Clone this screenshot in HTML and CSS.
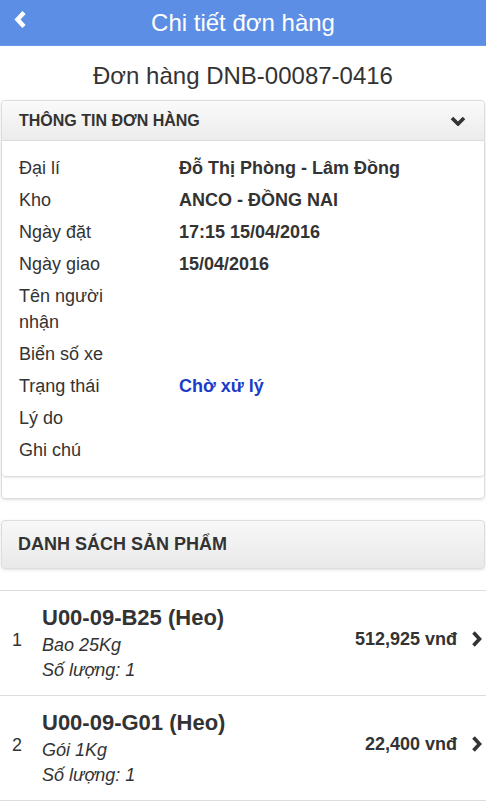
FILE: index.html
```html
<!DOCTYPE html>
<html lang="vi">
<head>
    <meta charset="UTF-8">
    <meta name="viewport" content="width=device-width, initial-scale=1.0">
    <title>Chi tiết đơn hàng</title>
    <link rel="stylesheet" href="styles.css">
</head>
<body>

    <div class="topbar">
        <a class="back" href="#">
            <svg width="15" height="19" viewBox="0 0 15 19"><polyline points="11,2.5 4.5,9.5 11,16.5" fill="none" stroke="#fff" stroke-width="4.5"/></svg>
        </a>
        <div class="topbar-title">Chi tiết đơn hàng</div>
    </div>

    <h2 class="order-code">Đơn hàng DNB-00087-0416</h2>

    <!-- Thong tin don hang -->
    <div class="card">
        <div class="card-head">
            <span>THÔNG TIN ĐƠN HÀNG</span>
            <svg width="16" height="10" viewBox="0 0 16 10"><polyline points="2,2 8,8 14,2" fill="none" stroke="#333" stroke-width="3.6"/></svg>
        </div>
        <div class="card-body">
            <div class="info-row"><div class="label">Đại lí</div><div class="value">Đỗ Thị Phòng - Lâm Đồng</div></div>
            <div class="info-row"><div class="label">Kho</div><div class="value">ANCO - ĐỒNG NAI</div></div>
            <div class="info-row"><div class="label">Ngày đặt</div><div class="value">17:15 15/04/2016</div></div>
            <div class="info-row"><div class="label">Ngày giao</div><div class="value">15/04/2016</div></div>
            <div class="info-row"><div class="label">Tên người nhận</div><div class="value"></div></div>
            <div class="info-row"><div class="label">Biển số xe</div><div class="value"></div></div>
            <div class="info-row"><div class="label">Trạng thái</div><div class="value status">Chờ xử lý</div></div>
            <div class="info-row"><div class="label">Lý do</div><div class="value"></div></div>
            <div class="info-row"><div class="label">Ghi chú</div><div class="value"></div></div>
        </div>
        <div class="card-foot"></div>
    </div>

    <div class="section-head">DANH SÁCH SẢN PHẨM</div>

    <ul class="product-list">
        <li class="product">
            <div class="num">1</div>
            <div class="product-info">
                <div class="product-name">U00-09-B25 (Heo)</div>
                <div class="product-sub">Bao 25Kg</div>
                <div class="product-sub">Số lượng: 1</div>
            </div>
            <div class="price">512,925 vnđ</div>
            <svg class="arrow" width="11" height="16" viewBox="0 0 11 16"><polyline points="2.5,1.5 8.5,8 2.5,14.5" fill="none" stroke="#333" stroke-width="3.6"/></svg>
        </li>
        <li class="product">
            <div class="num">2</div>
            <div class="product-info">
                <div class="product-name">U00-09-G01 (Heo)</div>
                <div class="product-sub">Gói 1Kg</div>
                <div class="product-sub">Số lượng: 1</div>
            </div>
            <div class="price">22,400 vnđ</div>
            <svg class="arrow" width="11" height="16" viewBox="0 0 11 16"><polyline points="2.5,1.5 8.5,8 2.5,14.5" fill="none" stroke="#333" stroke-width="3.6"/></svg>
        </li>
    </ul>

</body>
</html>
```

FILE: styles.css
```css
body {
    font-family: 'Liberation Sans', Arial, sans-serif;
    color: #333;
    background: #fff;
    margin: 0;
    overflow: hidden;
}

.topbar {
    position: relative;
    height: 46px;
    background: #5b8ee4;
    border-bottom: 1px solid #6a9ae8;
    box-sizing: border-box;
    display: flex;
    align-items: center;
    justify-content: center;
}

.topbar-title {
    color: #fff;
    font-size: 24px;
    line-height: 44px;
}

.back {
    position: absolute;
    left: 13px;
    top: 10px;
    display: flex;
}

.order-code {
    font-size: 24px;
    font-weight: normal;
    line-height: 26px;
    text-align: center;
    margin: 17px 0 11px;
}

.card {
    margin: 0 1px;
    border: 1px solid #ddd;
    border-radius: 4px;
    box-shadow: 0 1px 3px rgba(0, 0, 0, 0.12);
}

.card-head {
    height: 39px;
    padding: 0 18px 0 17px;
    display: flex;
    align-items: center;
    justify-content: space-between;
    font-size: 16px;
    font-weight: bold;
    background: linear-gradient(to bottom, #fafafa, #ececec);
    border-bottom: 1px solid #ddd;
    border-radius: 4px 4px 0 0;
}

.card-body {
    padding: 11px 17px 10px;
    border-bottom: 1px solid #ddd;
    border-radius: 0 0 4px 4px;
    box-shadow: 0 1px 2px rgba(0, 0, 0, 0.08);
}

.info-row {
    display: grid;
    grid-template-columns: 110px 1fr;
    column-gap: 50px;
    padding: 3px 0;
    font-size: 18px;
    line-height: 26px;
}

.value {
    font-weight: bold;
}

.status {
    color: #1a3cc8;
}

.card-foot {
    height: 21px;
}

.section-head {
    margin: 21px 1px 0;
    height: 47px;
    padding-left: 16px;
    display: flex;
    align-items: center;
    font-size: 18px;
    font-weight: bold;
    background: linear-gradient(to bottom, #f8f8f8, #e9e9e9);
    border: 1px solid #ddd;
    border-radius: 4px;
    box-shadow: 0 1px 3px rgba(0, 0, 0, 0.12);
}

.product-list {
    list-style: none;
    margin: 21px 0 0;
    padding: 0;
    border-top: 1px solid #ddd;
}

.product {
    display: flex;
    align-items: center;
    padding: 12px 4px 12px 12px;
    border-bottom: 1px solid #ddd;
}

.num {
    width: 30px;
    font-size: 18px;
    margin-top: -6px;
}

.product-info {
    flex: 1;
}

.product-name {
    font-size: 22px;
    font-weight: bold;
    line-height: 30px;
}

.product-sub {
    font-size: 18px;
    font-style: italic;
    line-height: 25px;
}

.price {
    font-size: 18px;
    font-weight: bold;
    margin-top: -8px;
}

.arrow {
    margin: -8px 0 0 14px;
}
```
